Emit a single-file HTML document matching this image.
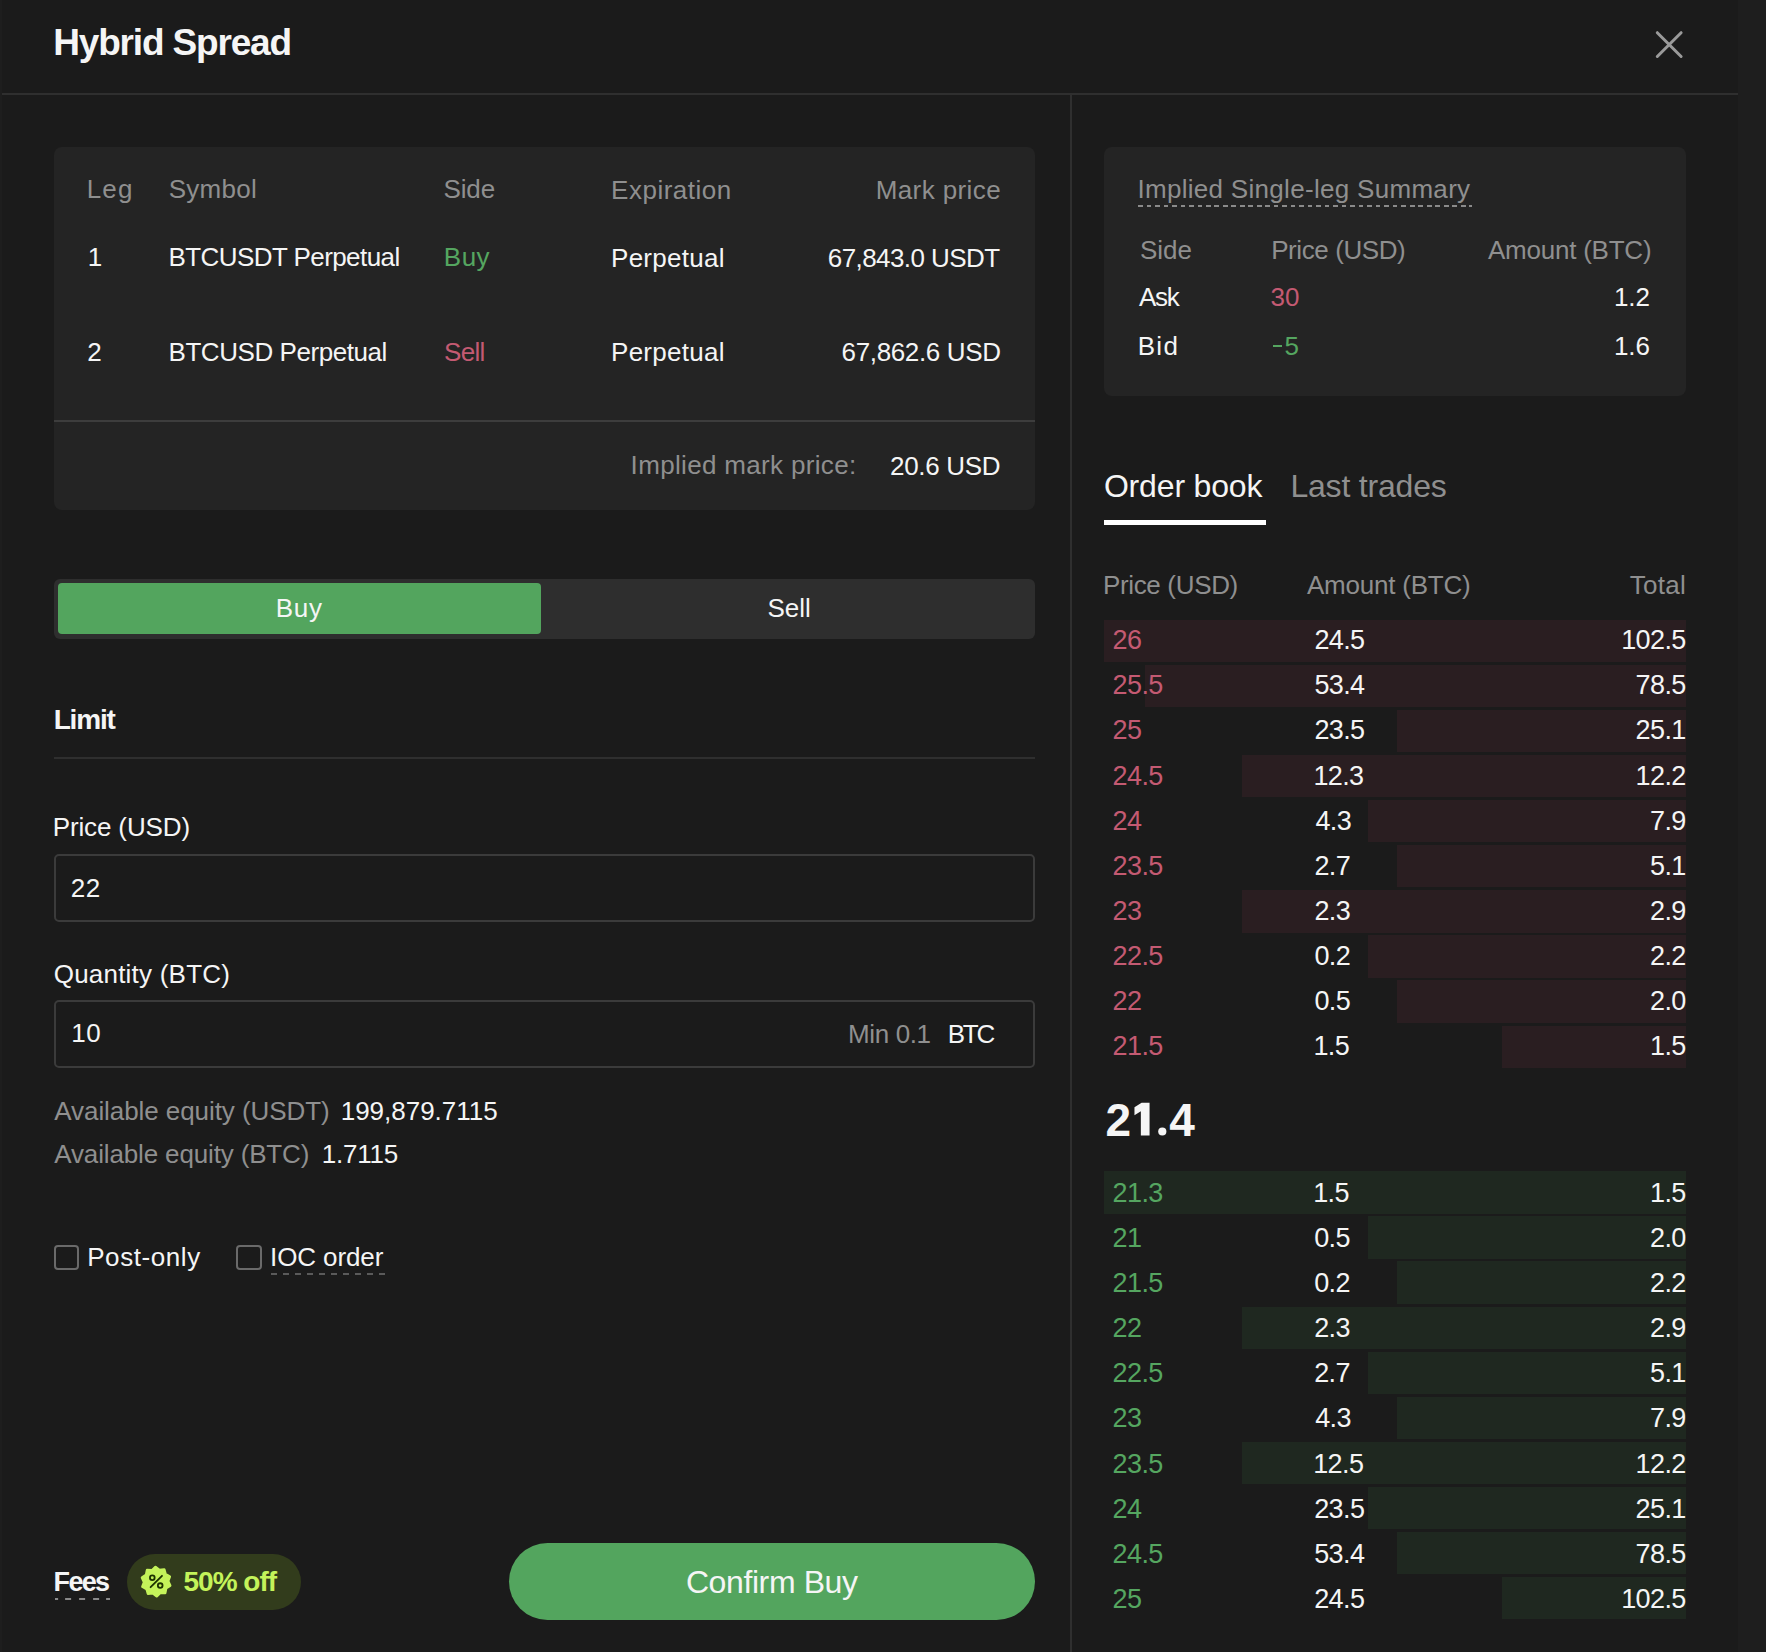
<!DOCTYPE html>
<html><head><meta charset="utf-8"><title>Hybrid Spread</title>
<style>
html,body{margin:0;padding:0;width:1766px;height:1652px;overflow:hidden;background:#1b1b1b;}
.r{position:absolute;}
.t{position:absolute;white-space:nowrap;font-family:"Liberation Sans",sans-serif;}
</style></head><body>
<div class="r" style="left:0px;top:0px;width:1766px;height:1652px;background:#1e1e1e;"></div>
<div class="r" style="left:2px;top:0px;width:1736px;height:1652px;background:#1b1b1b;"></div>
<div class="r" style="left:2px;top:93px;width:1736px;height:2px;background:#2f2f2f;"></div>
<div class="r" style="left:1070px;top:95px;width:2px;height:1557px;background:#2f2f2f;"></div>
<div class="r" style="left:54px;top:147px;width:981px;height:362.8px;background:#242424;border-radius:8px"></div>
<div class="r" style="left:54px;top:420px;width:981px;height:2px;background:#3d3d3d;"></div>
<div class="r" style="left:1104px;top:147px;width:582px;height:248.5px;background:#242424;border-radius:8px"></div>
<div class="r" style="left:54px;top:578.5px;width:981px;height:60px;background:#2e2e2e;border-radius:6px"></div>
<div class="r" style="left:58px;top:582.5px;width:483px;height:51.8px;background:#53a55e;border-radius:4px"></div>
<div class="r" style="left:54px;top:757px;width:981px;height:2px;background:#2f2f2f;"></div>
<div class="r" style="left:54px;top:854px;width:981px;height:67.5px;background:transparent;box-sizing:border-box;border:2px solid #3b3b3b;border-radius:5px"></div>
<div class="r" style="left:54px;top:1000.3px;width:981px;height:67.3px;background:transparent;box-sizing:border-box;border:2px solid #3b3b3b;border-radius:5px"></div>
<div class="r" style="left:54px;top:1244.5px;width:25.2px;height:25.2px;background:transparent;box-sizing:border-box;border:2px solid #6a6a6a;border-radius:4px"></div>
<div class="r" style="left:236.4px;top:1244.5px;width:25.2px;height:25.2px;background:transparent;box-sizing:border-box;border:2px solid #6a6a6a;border-radius:4px"></div>
<div class="r" style="left:1138.3px;top:205px;width:333.5px;height:2px;background:repeating-linear-gradient(90deg,#8a8a8a 0 4.5px,transparent 4.5px 8.5px);background-position:0px 0"></div>
<div class="r" style="left:270.5px;top:1272.5px;width:114.19999999999999px;height:2px;background:repeating-linear-gradient(90deg,#5a5a5a 0 6px,transparent 6px 12px);background-position:0px 0"></div>
<div class="r" style="left:54.6px;top:1598px;width:55.199999999999996px;height:2.2px;background:repeating-linear-gradient(90deg,#8a8a8a 0 6.6px,transparent 6.6px 13.9px);background-position:-3.9px 0"></div>
<div class="r" style="left:1272.7px;top:345px;width:9.8px;height:2.2px;background:#55a660;"></div>
<svg class="r" style="left:1130px;top:1100px" width="40" height="40" viewBox="1130 1100 40 40"><polygon points="1149.56,1102.64 1149.56,1135.48 1140.85,1135.48 1140.85,1111.2 1134.47,1115.2 1134.47,1107.3 1141.6,1102.64" fill="#f5f5f5"/><circle cx="1162.3" cy="1131.5" r="4.1" fill="#f5f5f5"/></svg>
<div class="r" style="left:1104px;top:520px;width:161.5px;height:5px;background:#ffffff;"></div>
<div class="r" style="left:1104px;top:619.6px;width:582px;height:42.4px;background:#2a1e21;"></div>
<div class="r" style="left:1145px;top:664.7px;width:541px;height:42.4px;background:#2a1e21;"></div>
<div class="r" style="left:1397px;top:709.8px;width:289px;height:42.4px;background:#2a1e21;"></div>
<div class="r" style="left:1242px;top:754.9px;width:444px;height:42.4px;background:#2a1e21;"></div>
<div class="r" style="left:1368px;top:800.0px;width:318px;height:42.4px;background:#2a1e21;"></div>
<div class="r" style="left:1397px;top:845.1px;width:289px;height:42.4px;background:#2a1e21;"></div>
<div class="r" style="left:1242px;top:890.2px;width:444px;height:42.4px;background:#2a1e21;"></div>
<div class="r" style="left:1368px;top:935.3px;width:318px;height:42.4px;background:#2a1e21;"></div>
<div class="r" style="left:1397px;top:980.4px;width:289px;height:42.4px;background:#2a1e21;"></div>
<div class="r" style="left:1502px;top:1025.5px;width:184px;height:42.4px;background:#2a1e21;"></div>
<div class="r" style="left:1104px;top:1171.2px;width:582px;height:42.4px;background:#1f2820;"></div>
<div class="r" style="left:1368px;top:1216.3px;width:318px;height:42.4px;background:#1f2820;"></div>
<div class="r" style="left:1397px;top:1261.4px;width:289px;height:42.4px;background:#1f2820;"></div>
<div class="r" style="left:1242px;top:1306.5px;width:444px;height:42.4px;background:#1f2820;"></div>
<div class="r" style="left:1368px;top:1351.6px;width:318px;height:42.4px;background:#1f2820;"></div>
<div class="r" style="left:1397px;top:1396.7px;width:289px;height:42.4px;background:#1f2820;"></div>
<div class="r" style="left:1242px;top:1441.8px;width:444px;height:42.4px;background:#1f2820;"></div>
<div class="r" style="left:1368px;top:1486.9px;width:318px;height:42.4px;background:#1f2820;"></div>
<div class="r" style="left:1397px;top:1532.0px;width:289px;height:42.4px;background:#1f2820;"></div>
<div class="r" style="left:1502px;top:1577.1px;width:184px;height:42.4px;background:#1f2820;"></div>
<div class="r" style="left:127px;top:1554px;width:174px;height:56px;background:#323c1c;border-radius:28px"></div>
<div class="r" style="left:508.7px;top:1543px;width:526.8px;height:77.4px;background:#53a55e;border-radius:39px"></div>
<svg class="r" style="left:127px;top:1554px" width="60" height="56" viewBox="0 0 60 56">
<polygon points="28.52,13.01 32.35,16.05 37.20,15.45 38.52,20.16 42.79,22.54 41.09,27.12 43.15,31.55 39.08,34.26 38.15,39.06 33.26,38.86 29.68,42.19 25.85,39.15 21.00,39.75 19.68,35.04 15.41,32.66 17.11,28.08 15.05,23.65 19.12,20.94 20.05,16.14 24.94,16.34" fill="#c4f35a" stroke="#c4f35a" stroke-width="2.6" stroke-linejoin="round"/>
<circle cx="25.30000000000001" cy="23.799999999999955" r="2.35" fill="none" stroke="#1d3300" stroke-width="1.8"/>
<circle cx="33.19999999999999" cy="31.59999999999991" r="2.35" fill="none" stroke="#1d3300" stroke-width="1.8"/>
<line x1="23.599999999999994" y1="33.200000000000045" x2="35" y2="21.799999999999955" stroke="#1d3300" stroke-width="1.8" stroke-linecap="round"/>
</svg>
<svg class="r" style="left:1650px;top:25px" width="40" height="40" viewBox="0 0 40 40">
<path d="M7.3 7.7 L31.1 31.5 M31.1 7.7 L7.3 31.5" stroke="#9a9a9a" stroke-width="3" stroke-linecap="round"/></svg>
<div class="t" style="left:53.20px;top:23.70px;font:700 37px/37px 'Liberation Sans';letter-spacing:-1.166px;color:#f5f5f5">Hybrid Spread</div>
<div class="t" style="left:86.70px;top:176.30px;font:400 26px/26px 'Liberation Sans';letter-spacing:1.190px;color:#8f8f8f">Leg</div>
<div class="t" style="left:168.80px;top:176.30px;font:400 26px/26px 'Liberation Sans';letter-spacing:0.236px;color:#8f8f8f">Symbol</div>
<div class="t" style="left:443.50px;top:176.30px;font:400 26px/26px 'Liberation Sans';letter-spacing:-0.126px;color:#8f8f8f">Side</div>
<div class="t" style="left:611.10px;top:176.80px;font:400 26px/26px 'Liberation Sans';letter-spacing:0.505px;color:#8f8f8f">Expiration</div>
<div class="t" style="left:875.70px;top:176.80px;font:400 26px/26px 'Liberation Sans';letter-spacing:0.401px;color:#8f8f8f">Mark price</div>
<div class="t" style="left:87.70px;top:244.30px;font:400 26px/26px 'Liberation Sans';letter-spacing:0.000px;color:#f5f5f5">1</div>
<div class="t" style="left:168.50px;top:244.30px;font:400 26px/26px 'Liberation Sans';letter-spacing:-0.570px;color:#f5f5f5">BTCUSDT Perpetual</div>
<div class="t" style="left:443.80px;top:244.30px;font:400 26px/26px 'Liberation Sans';letter-spacing:0.499px;color:#55a660">Buy</div>
<div class="t" style="left:611.00px;top:244.80px;font:400 26px/26px 'Liberation Sans';letter-spacing:0.285px;color:#f5f5f5">Perpetual</div>
<div class="t" style="left:827.80px;top:244.80px;font:400 26px/26px 'Liberation Sans';letter-spacing:-0.577px;color:#f5f5f5">67,843.0 USDT</div>
<div class="t" style="left:87.20px;top:339.20px;font:400 26px/26px 'Liberation Sans';letter-spacing:0.000px;color:#f5f5f5">2</div>
<div class="t" style="left:168.50px;top:339.20px;font:400 26px/26px 'Liberation Sans';letter-spacing:-0.443px;color:#f5f5f5">BTCUSD Perpetual</div>
<div class="t" style="left:444.00px;top:339.20px;font:400 26px/26px 'Liberation Sans';letter-spacing:-0.693px;color:#c45a72">Sell</div>
<div class="t" style="left:611.00px;top:339.40px;font:400 26px/26px 'Liberation Sans';letter-spacing:0.285px;color:#f5f5f5">Perpetual</div>
<div class="t" style="left:841.60px;top:339.40px;font:400 26px/26px 'Liberation Sans';letter-spacing:-0.359px;color:#f5f5f5">67,862.6 USD</div>
<div class="t" style="left:630.60px;top:452.20px;font:400 26px/26px 'Liberation Sans';letter-spacing:0.334px;color:#8f8f8f">Implied mark price:</div>
<div class="t" style="left:890.00px;top:453.30px;font:400 26px/26px 'Liberation Sans';letter-spacing:-0.306px;color:#f5f5f5">20.6 USD</div>
<div class="t" style="left:275.70px;top:594.90px;font:400 26px/26px 'Liberation Sans';letter-spacing:0.699px;color:#f5f5f5">Buy</div>
<div class="t" style="left:767.50px;top:595.20px;font:400 26px/26px 'Liberation Sans';letter-spacing:-0.059px;color:#f5f5f5">Sell</div>
<div class="t" style="left:53.70px;top:706.40px;font:700 28px/28px 'Liberation Sans';letter-spacing:-1.190px;color:#f5f5f5">Limit</div>
<div class="t" style="left:52.70px;top:814.10px;font:400 26px/26px 'Liberation Sans';letter-spacing:-0.131px;color:#f5f5f5">Price (USD)</div>
<div class="t" style="left:70.70px;top:874.90px;font:400 26px/26px 'Liberation Sans';letter-spacing:0.540px;color:#f5f5f5">22</div>
<div class="t" style="left:53.70px;top:960.50px;font:400 26px/26px 'Liberation Sans';letter-spacing:0.222px;color:#f5f5f5">Quantity (BTC)</div>
<div class="t" style="left:71.20px;top:1020.40px;font:400 26px/26px 'Liberation Sans';letter-spacing:0.540px;color:#f5f5f5">10</div>
<div class="t" style="left:848.00px;top:1020.60px;font:400 26px/26px 'Liberation Sans';letter-spacing:-0.367px;color:#8f8f8f">Min 0.1</div>
<div class="t" style="left:947.70px;top:1020.60px;font:400 26px/26px 'Liberation Sans';letter-spacing:-2.262px;color:#f5f5f5">BTC</div>
<div class="t" style="left:54.30px;top:1097.60px;font:400 26px/26px 'Liberation Sans';letter-spacing:-0.073px;color:#8f8f8f">Available equity (USDT)</div>
<div class="t" style="left:340.70px;top:1097.80px;font:400 26px/26px 'Liberation Sans';letter-spacing:-0.014px;color:#f5f5f5">199,879.7115</div>
<div class="t" style="left:54.30px;top:1140.50px;font:400 26px/26px 'Liberation Sans';letter-spacing:-0.149px;color:#8f8f8f">Available equity (BTC)</div>
<div class="t" style="left:321.70px;top:1140.60px;font:400 26px/26px 'Liberation Sans';letter-spacing:-0.207px;color:#f5f5f5">1.7115</div>
<div class="t" style="left:87.20px;top:1244.20px;font:400 26px/26px 'Liberation Sans';letter-spacing:0.578px;color:#f5f5f5">Post-only</div>
<div class="t" style="left:270.10px;top:1244.20px;font:400 26px/26px 'Liberation Sans';letter-spacing:-0.111px;color:#f5f5f5">IOC order</div>
<div class="t" style="left:53.60px;top:1568.70px;font:700 27px/27px 'Liberation Sans';letter-spacing:-1.708px;color:#f5f5f5">Fees</div>
<div class="t" style="left:183.50px;top:1567.70px;font:700 28px/28px 'Liberation Sans';letter-spacing:-0.991px;color:#c4f35a">50% off</div>
<div class="t" style="left:685.90px;top:1566.00px;font:400 32px/32px 'Liberation Sans';letter-spacing:-0.395px;color:#f5f5f5">Confirm Buy</div>
<div class="t" style="left:1137.40px;top:176.10px;font:400 26px/26px 'Liberation Sans';letter-spacing:0.303px;color:#8f8f8f">Implied Single-leg Summary</div>
<div class="t" style="left:1139.90px;top:236.50px;font:400 26px/26px 'Liberation Sans';letter-spacing:0.007px;color:#8f8f8f">Side</div>
<div class="t" style="left:1271.20px;top:236.50px;font:400 26px/26px 'Liberation Sans';letter-spacing:-0.411px;color:#8f8f8f">Price (USD)</div>
<div class="t" style="left:1487.90px;top:236.50px;font:400 26px/26px 'Liberation Sans';letter-spacing:-0.226px;color:#8f8f8f">Amount (BTC)</div>
<div class="t" style="left:1139.00px;top:283.50px;font:400 26px/26px 'Liberation Sans';letter-spacing:-1.271px;color:#f5f5f5">Ask</div>
<div class="t" style="left:1270.40px;top:283.50px;font:400 26px/26px 'Liberation Sans';letter-spacing:0.140px;color:#c45a72">30</div>
<div class="t" style="left:1613.90px;top:283.50px;font:400 26px/26px 'Liberation Sans';letter-spacing:-0.092px;color:#f5f5f5">1.2</div>
<div class="t" style="left:1137.70px;top:332.70px;font:400 26px/26px 'Liberation Sans';letter-spacing:1.341px;color:#f5f5f5">Bid</div>
<div class="t" style="left:1284.50px;top:332.70px;font:400 26px/26px 'Liberation Sans';letter-spacing:0.000px;color:#55a660">5</div>
<div class="t" style="left:1613.90px;top:332.70px;font:400 26px/26px 'Liberation Sans';letter-spacing:-0.092px;color:#f5f5f5">1.6</div>
<div class="t" style="left:1103.90px;top:470.20px;font:400 32px/32px 'Liberation Sans';letter-spacing:-0.164px;color:#f5f5f5">Order book</div>
<div class="t" style="left:1290.40px;top:470.20px;font:400 32px/32px 'Liberation Sans';letter-spacing:-0.191px;color:#8f8f8f">Last trades</div>
<div class="t" style="left:1102.90px;top:571.50px;font:400 26px/26px 'Liberation Sans';letter-spacing:-0.331px;color:#8f8f8f">Price (USD)</div>
<div class="t" style="left:1306.90px;top:571.50px;font:400 26px/26px 'Liberation Sans';letter-spacing:-0.217px;color:#8f8f8f">Amount (BTC)</div>
<div class="t" style="left:1629.80px;top:571.60px;font:400 26px/26px 'Liberation Sans';letter-spacing:0.264px;color:#8f8f8f">Total</div>
<div class="t" style="left:1105.60px;top:1096.50px;font:700 46px/46px 'Liberation Sans';letter-spacing:0.000px;color:#f5f5f5">2</div>
<div class="t" style="left:1169.30px;top:1096.50px;font:700 46px/46px 'Liberation Sans';letter-spacing:0.000px;color:#f5f5f5">4</div>
<div class="t" style="left:1112.60px;top:627.20px;font:400 27px/27px 'Liberation Sans';letter-spacing:-0.600px;color:#c45a72">26</div>
<div class="t" style="left:1314.40px;top:627.20px;font:400 27px/27px 'Liberation Sans';letter-spacing:-0.600px;color:#f5f5f5">24.5</div>
<div class="t" style="left:1621.15px;top:627.20px;font:400 27px/27px 'Liberation Sans';letter-spacing:-0.600px;color:#f5f5f5">102.5</div>
<div class="t" style="left:1112.60px;top:672.30px;font:400 27px/27px 'Liberation Sans';letter-spacing:-0.600px;color:#c45a72">25.5</div>
<div class="t" style="left:1314.40px;top:672.30px;font:400 27px/27px 'Liberation Sans';letter-spacing:-0.600px;color:#f5f5f5">53.4</div>
<div class="t" style="left:1635.57px;top:672.30px;font:400 27px/27px 'Liberation Sans';letter-spacing:-0.600px;color:#f5f5f5">78.5</div>
<div class="t" style="left:1112.60px;top:717.40px;font:400 27px/27px 'Liberation Sans';letter-spacing:-0.600px;color:#c45a72">25</div>
<div class="t" style="left:1314.40px;top:717.40px;font:400 27px/27px 'Liberation Sans';letter-spacing:-0.600px;color:#f5f5f5">23.5</div>
<div class="t" style="left:1635.57px;top:717.40px;font:400 27px/27px 'Liberation Sans';letter-spacing:-0.600px;color:#f5f5f5">25.1</div>
<div class="t" style="left:1112.60px;top:762.50px;font:400 27px/27px 'Liberation Sans';letter-spacing:-0.600px;color:#c45a72">24.5</div>
<div class="t" style="left:1313.40px;top:762.50px;font:400 27px/27px 'Liberation Sans';letter-spacing:-0.600px;color:#f5f5f5">12.3</div>
<div class="t" style="left:1635.57px;top:762.50px;font:400 27px/27px 'Liberation Sans';letter-spacing:-0.600px;color:#f5f5f5">12.2</div>
<div class="t" style="left:1112.60px;top:807.60px;font:400 27px/27px 'Liberation Sans';letter-spacing:-0.600px;color:#c45a72">24</div>
<div class="t" style="left:1315.40px;top:807.60px;font:400 27px/27px 'Liberation Sans';letter-spacing:-0.600px;color:#f5f5f5">4.3</div>
<div class="t" style="left:1649.98px;top:807.60px;font:400 27px/27px 'Liberation Sans';letter-spacing:-0.600px;color:#f5f5f5">7.9</div>
<div class="t" style="left:1112.60px;top:852.70px;font:400 27px/27px 'Liberation Sans';letter-spacing:-0.600px;color:#c45a72">23.5</div>
<div class="t" style="left:1314.40px;top:852.70px;font:400 27px/27px 'Liberation Sans';letter-spacing:-0.600px;color:#f5f5f5">2.7</div>
<div class="t" style="left:1649.98px;top:852.70px;font:400 27px/27px 'Liberation Sans';letter-spacing:-0.600px;color:#f5f5f5">5.1</div>
<div class="t" style="left:1112.60px;top:897.80px;font:400 27px/27px 'Liberation Sans';letter-spacing:-0.600px;color:#c45a72">23</div>
<div class="t" style="left:1314.40px;top:897.80px;font:400 27px/27px 'Liberation Sans';letter-spacing:-0.600px;color:#f5f5f5">2.3</div>
<div class="t" style="left:1649.98px;top:897.80px;font:400 27px/27px 'Liberation Sans';letter-spacing:-0.600px;color:#f5f5f5">2.9</div>
<div class="t" style="left:1112.60px;top:942.90px;font:400 27px/27px 'Liberation Sans';letter-spacing:-0.600px;color:#c45a72">22.5</div>
<div class="t" style="left:1314.40px;top:942.90px;font:400 27px/27px 'Liberation Sans';letter-spacing:-0.600px;color:#f5f5f5">0.2</div>
<div class="t" style="left:1649.98px;top:942.90px;font:400 27px/27px 'Liberation Sans';letter-spacing:-0.600px;color:#f5f5f5">2.2</div>
<div class="t" style="left:1112.60px;top:988.00px;font:400 27px/27px 'Liberation Sans';letter-spacing:-0.600px;color:#c45a72">22</div>
<div class="t" style="left:1314.40px;top:988.00px;font:400 27px/27px 'Liberation Sans';letter-spacing:-0.600px;color:#f5f5f5">0.5</div>
<div class="t" style="left:1649.98px;top:988.00px;font:400 27px/27px 'Liberation Sans';letter-spacing:-0.600px;color:#f5f5f5">2.0</div>
<div class="t" style="left:1112.60px;top:1033.10px;font:400 27px/27px 'Liberation Sans';letter-spacing:-0.600px;color:#c45a72">21.5</div>
<div class="t" style="left:1313.40px;top:1033.10px;font:400 27px/27px 'Liberation Sans';letter-spacing:-0.600px;color:#f5f5f5">1.5</div>
<div class="t" style="left:1649.98px;top:1033.10px;font:400 27px/27px 'Liberation Sans';letter-spacing:-0.600px;color:#f5f5f5">1.5</div>
<div class="t" style="left:1112.60px;top:1179.90px;font:400 27px/27px 'Liberation Sans';letter-spacing:-0.600px;color:#55a660">21.3</div>
<div class="t" style="left:1313.20px;top:1179.90px;font:400 27px/27px 'Liberation Sans';letter-spacing:-0.600px;color:#f5f5f5">1.5</div>
<div class="t" style="left:1649.98px;top:1179.90px;font:400 27px/27px 'Liberation Sans';letter-spacing:-0.600px;color:#f5f5f5">1.5</div>
<div class="t" style="left:1112.60px;top:1225.00px;font:400 27px/27px 'Liberation Sans';letter-spacing:-0.600px;color:#55a660">21</div>
<div class="t" style="left:1314.20px;top:1225.00px;font:400 27px/27px 'Liberation Sans';letter-spacing:-0.600px;color:#f5f5f5">0.5</div>
<div class="t" style="left:1649.98px;top:1225.00px;font:400 27px/27px 'Liberation Sans';letter-spacing:-0.600px;color:#f5f5f5">2.0</div>
<div class="t" style="left:1112.60px;top:1270.10px;font:400 27px/27px 'Liberation Sans';letter-spacing:-0.600px;color:#55a660">21.5</div>
<div class="t" style="left:1314.20px;top:1270.10px;font:400 27px/27px 'Liberation Sans';letter-spacing:-0.600px;color:#f5f5f5">0.2</div>
<div class="t" style="left:1649.98px;top:1270.10px;font:400 27px/27px 'Liberation Sans';letter-spacing:-0.600px;color:#f5f5f5">2.2</div>
<div class="t" style="left:1112.60px;top:1315.20px;font:400 27px/27px 'Liberation Sans';letter-spacing:-0.600px;color:#55a660">22</div>
<div class="t" style="left:1314.20px;top:1315.20px;font:400 27px/27px 'Liberation Sans';letter-spacing:-0.600px;color:#f5f5f5">2.3</div>
<div class="t" style="left:1649.98px;top:1315.20px;font:400 27px/27px 'Liberation Sans';letter-spacing:-0.600px;color:#f5f5f5">2.9</div>
<div class="t" style="left:1112.60px;top:1360.30px;font:400 27px/27px 'Liberation Sans';letter-spacing:-0.600px;color:#55a660">22.5</div>
<div class="t" style="left:1314.20px;top:1360.30px;font:400 27px/27px 'Liberation Sans';letter-spacing:-0.600px;color:#f5f5f5">2.7</div>
<div class="t" style="left:1649.98px;top:1360.30px;font:400 27px/27px 'Liberation Sans';letter-spacing:-0.600px;color:#f5f5f5">5.1</div>
<div class="t" style="left:1112.60px;top:1405.40px;font:400 27px/27px 'Liberation Sans';letter-spacing:-0.600px;color:#55a660">23</div>
<div class="t" style="left:1315.20px;top:1405.40px;font:400 27px/27px 'Liberation Sans';letter-spacing:-0.600px;color:#f5f5f5">4.3</div>
<div class="t" style="left:1649.98px;top:1405.40px;font:400 27px/27px 'Liberation Sans';letter-spacing:-0.600px;color:#f5f5f5">7.9</div>
<div class="t" style="left:1112.60px;top:1450.50px;font:400 27px/27px 'Liberation Sans';letter-spacing:-0.600px;color:#55a660">23.5</div>
<div class="t" style="left:1313.20px;top:1450.50px;font:400 27px/27px 'Liberation Sans';letter-spacing:-0.600px;color:#f5f5f5">12.5</div>
<div class="t" style="left:1635.57px;top:1450.50px;font:400 27px/27px 'Liberation Sans';letter-spacing:-0.600px;color:#f5f5f5">12.2</div>
<div class="t" style="left:1112.60px;top:1495.60px;font:400 27px/27px 'Liberation Sans';letter-spacing:-0.600px;color:#55a660">24</div>
<div class="t" style="left:1314.20px;top:1495.60px;font:400 27px/27px 'Liberation Sans';letter-spacing:-0.600px;color:#f5f5f5">23.5</div>
<div class="t" style="left:1635.57px;top:1495.60px;font:400 27px/27px 'Liberation Sans';letter-spacing:-0.600px;color:#f5f5f5">25.1</div>
<div class="t" style="left:1112.60px;top:1540.70px;font:400 27px/27px 'Liberation Sans';letter-spacing:-0.600px;color:#55a660">24.5</div>
<div class="t" style="left:1314.20px;top:1540.70px;font:400 27px/27px 'Liberation Sans';letter-spacing:-0.600px;color:#f5f5f5">53.4</div>
<div class="t" style="left:1635.57px;top:1540.70px;font:400 27px/27px 'Liberation Sans';letter-spacing:-0.600px;color:#f5f5f5">78.5</div>
<div class="t" style="left:1112.60px;top:1585.80px;font:400 27px/27px 'Liberation Sans';letter-spacing:-0.600px;color:#55a660">25</div>
<div class="t" style="left:1314.20px;top:1585.80px;font:400 27px/27px 'Liberation Sans';letter-spacing:-0.600px;color:#f5f5f5">24.5</div>
<div class="t" style="left:1621.15px;top:1585.80px;font:400 27px/27px 'Liberation Sans';letter-spacing:-0.600px;color:#f5f5f5">102.5</div>
</body></html>
